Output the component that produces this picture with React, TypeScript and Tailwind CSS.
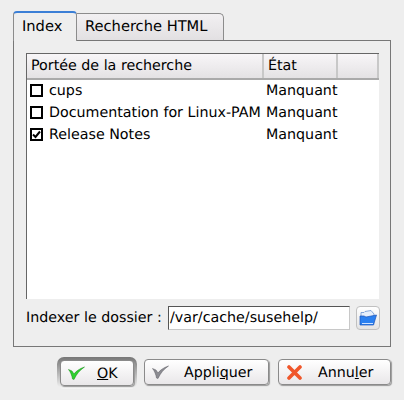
// KDE-style help index dialog
const headCell = "flex items-center border-r-2 border-[#c8c8c8] bg-gradient-to-b from-[#f8f6f8] to-[#e4e2e4] pl-[4px] pt-[2px]";

function CheckBox({ checked }: { checked?: boolean }) {
  return (
    <span className="mb-[2px] flex h-[13px] w-[13px] shrink-0 items-center justify-center border-2 border-black bg-white">
      {checked && (
        <svg width="9" height="9" viewBox="0 0 9 9">
          <path d="M1 4.5 L3.5 7 L8 1.5" fill="none" stroke="#000" strokeWidth="2" />
        </svg>
      )}
    </span>
  );
}

function Row({ label, checked }: { label: string; checked?: boolean }) {
  return (
    <div className="flex h-[22px] items-center">
      <div className="flex w-[238px] items-center gap-[6px] pl-[3px] whitespace-nowrap">
        <CheckBox checked={checked} />
        <span className="pt-[2px]">{label}</span>
      </div>
      <span className="pl-[1px] pt-[2px]">Manquant</span>
    </div>
  );
}

function Btn({ icon, children, ring, textGap }: { icon: React.ReactNode; children: React.ReactNode; ring?: boolean; textGap: string }) {
  return (
    <div
      className={
        ring
          ? "rounded-[7px] bg-gradient-to-b from-[#777777] to-[#f6f6f6] p-[3px]"
          : "pb-[1px]"
      }
    >
      <div
        className={
          "flex h-[26px] items-center rounded-[4px] border border-[#8a8a8a] bg-gradient-to-b from-white to-[#e9e7e9] shadow-[1px_1px_1px_#999] " +
          (ring ? "w-[74px]" : "")
        }
      >
        <span className="ml-[6px] flex w-[18px] justify-center">{icon}</span>
        <span className={textGap + " pt-[3px]"}>{children}</span>
      </div>
    </div>
  );
}

const CheckIcon = ({ color, dark }: { color: string; dark: string }) => (
  <svg width="17" height="14" viewBox="0 0 17 14">
    <path d="M0.5 3.5 L4 5 L6 8 C8 5 12 2.5 16.5 1 C12 4 8.5 8 6 13.5 L4.5 13 C4 9.5 2.5 6 0.5 3.5 Z" fill={color} stroke={dark} strokeWidth="0.5" />
  </svg>
);

export default function App() {
  return (
    <div
      className="flex h-[400px] w-[404px] flex-col overflow-hidden bg-[#eeeeee] pl-[13px] pt-[10px] text-[14.25px] text-black [text-rendering:geometricPrecision]"
      style={{ fontFamily: '"DejaVu Sans", sans-serif' }}
    >
      <div className="relative z-10 flex h-[30px] items-end">
        <div className="h-[30px] w-[64px] rounded-t-[4px] border-x border-[#8c8c8c] border-t-2 border-t-[#3b7fd6] bg-[#eeeeee] pl-[8px] pt-[3px] text-[14.67px] -mb-px">
          Index
        </div>
        <div className="flex h-[27px] w-[147px] items-center rounded-tr-[5px] border-r border-t border-[#8c8c8c] bg-gradient-to-b from-[#f2f0f2] to-[#e2e0e2] pb-[1px] pl-[8px] text-[14.67px]">
          Recherche HTML
        </div>
      </div>
      <div className="flex h-[307px] w-[378px] flex-col border border-[#777777] pl-[12px] pt-[12px]">
        <div className="flex h-[246px] w-[353px] flex-col border-l border-t border-[#666666] bg-white">
          <div className="flex h-[26px] shrink-0 border-b-2 border-[#aaaaaa]">
            <div className={headCell + " w-[237px]"}>Portée de la recherche</div>
            <div className={headCell + " w-[74px]"}>État</div>
            <div className={headCell + " flex-1 border-r-0"} />
          </div>
          <div>
            <Row label="cups" />
            <Row label="Documentation for Linux-PAM" />
            <Row label="Release Notes" checked />
          </div>
        </div>
        <div className="mt-[7px] flex items-center">
          <span className="w-[142px] whitespace-nowrap pt-[2px]">Indexer le dossier :</span>
          <div className="flex h-[24px] w-[182px] items-center border border-[#c8c8c8] border-l-[#555555] border-t-[#555555] bg-white pl-[1px] pt-[1px]">
            /var/cache/susehelp/
          </div>
          <div className="ml-[6px] flex h-[24px] w-[24px] items-center justify-center rounded-[4px] border border-[#c0c0c0] bg-gradient-to-b from-white to-[#e4e4e4]">
            <svg width="18" height="16" viewBox="0 0 18 16">
              <path d="M2 2.5 L5 2.5 L6 1.5 L12 0.5 L15 4 L15 7 L2 8 Z" fill="#e6effb" stroke="#5a88cc" strokeWidth="0.7" />
              <path d="M1 6 L5 6 L7 7 L17.5 5 L14.5 15 L1 15 Z" fill="#2a80f0" stroke="#1c55b8" strokeWidth="0.7" />
              <path d="M3 13.5 L14 13.5" stroke="#cfe2ff" strokeWidth="1" />
            </svg>
          </div>
        </div>
      </div>
      <div className="mt-[10px] flex items-start pl-[44px]">
        <Btn ring textGap="ml-[12px]" icon={<CheckIcon color="#2ed12e" dark="#148a14" />}>
          <u>O</u>K
        </Btn>
        <div className="ml-[7px] mt-[2px] w-[125px]">
          <Btn textGap="ml-[15px]" icon={<CheckIcon color="#8c8c92" dark="#5c5c62" />}>
            Appli<u>q</u>uer
          </Btn>
        </div>
        <div className="ml-[9px] mt-[2px] w-[113px]">
          <Btn
            textGap="ml-[15px]"
            icon={
              <svg width="15" height="15" viewBox="0 0 15 15">
                <path d="M2 2 L13 13 M13 2 L2 13" stroke="#f0562a" strokeWidth="3.6" strokeLinecap="round" />
              </svg>
            }
          >
            Annu<u>l</u>er
          </Btn>
        </div>
      </div>
    </div>
  );
}
